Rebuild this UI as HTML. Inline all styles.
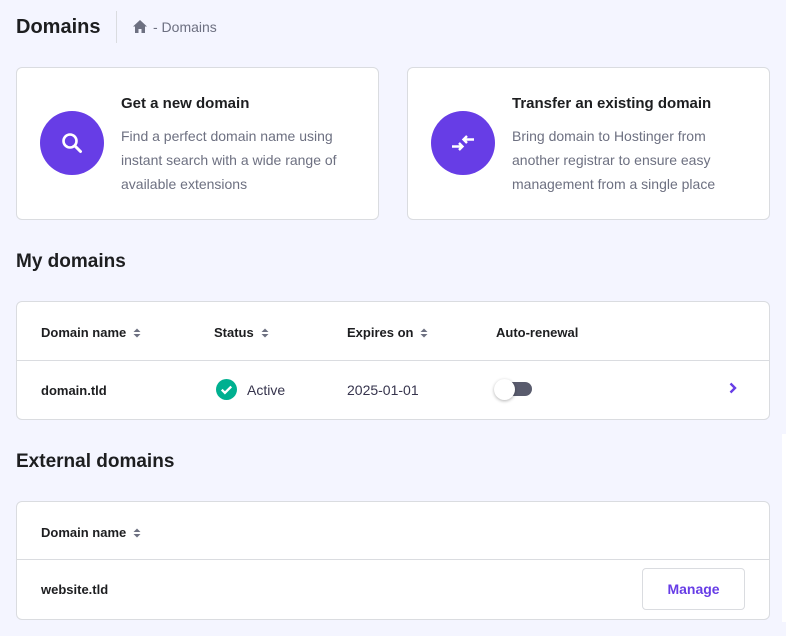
<!DOCTYPE html><html><head><style>
*{margin:0;padding:0;box-sizing:border-box}
body{width:786px;height:636px;background:#f4f5ff;font-family:"Liberation Sans",sans-serif;color:#1d1e20;position:relative;overflow:hidden}
.a{position:absolute;white-space:nowrap}
.card{position:absolute;background:#fff;border:1px solid #dadce0;border-radius:6px}
.circ{position:absolute;width:64px;height:64px;border-radius:50%;background:#673de6}
.t{font-size:15px;font-weight:bold}
.d{font-size:14px;color:#6d7081;line-height:24px}
.h{font-size:19px;font-weight:bold}
.th{font-size:13px;font-weight:bold}
.sort{display:inline-block;margin-left:7px;width:8px;height:10px;vertical-align:-1px}
</style></head><body>
<div class="a" style="left:16px;top:16px;font-size:20px;font-weight:bold">Domains</div>
<div class="a" style="left:116px;top:11px;width:1px;height:32px;background:#dadce0"></div>
<svg class="a" style="left:132px;top:19px" width="16" height="15" viewBox="0 0 16 15"><path d="M8 1L1 7.5h2V14h3.5V10h3v4H13V7.5h2z" fill="#6d7081"/></svg>
<div class="a" style="left:153px;top:19px;font-size:14px;color:#6d7081">- Domains</div>

<div class="card" style="left:16px;top:67px;width:363px;height:153px"></div>
<div class="circ" style="left:40px;top:111px"></div>
<svg class="a" style="left:58px;top:129px" width="28" height="28" viewBox="0 0 28 28"><circle cx="12" cy="12" r="6.5" fill="none" stroke="#fff" stroke-width="2.6"/><path d="M17 17l5.5 5.5" stroke="#fff" stroke-width="3" stroke-linecap="round"/></svg>
<div class="a t" style="left:121px;top:95px">Get a new domain</div>
<div class="a d" style="left:121px;top:124px">Find a perfect domain name using<br>instant search with a wide range of<br>available extensions</div>

<div class="card" style="left:407px;top:67px;width:363px;height:153px"></div>
<div class="circ" style="left:431px;top:111px"></div>
<svg class="a" style="left:449px;top:129px" width="28" height="28" viewBox="0 0 28 28"><path d="M3 17.5h10M10 14l3.5 3.5-3.5 3.5M25 10.5H15M18 7l-3.5 3.5 3.5 3.5" fill="none" stroke="#fff" stroke-width="2.4"/></svg>
<div class="a t" style="left:512px;top:95px">Transfer an existing domain</div>
<div class="a d" style="left:512px;top:124px">Bring domain to Hostinger from<br>another registrar to ensure easy<br>management from a single place</div>

<div class="a h" style="left:16px;top:251px">My domains</div>
<div class="card" style="left:16px;top:301px;width:754px;height:119px"></div>
<div class="a" style="left:17px;top:360px;width:752px;height:1px;background:#dadce0"></div>
<div class="a th" style="left:41px;top:325px">Domain name<svg class="sort" viewBox="0 0 8 10"><path d="M4 0.5L7.5 4h-7zM4 9.5L7.5 6h-7z" fill="#6d7081"/></svg></div>
<div class="a th" style="left:214px;top:325px">Status<svg class="sort" viewBox="0 0 8 10"><path d="M4 0.5L7.5 4h-7zM4 9.5L7.5 6h-7z" fill="#6d7081"/></svg></div>
<div class="a th" style="left:347px;top:325px">Expires on<svg class="sort" viewBox="0 0 8 10"><path d="M4 0.5L7.5 4h-7zM4 9.5L7.5 6h-7z" fill="#6d7081"/></svg></div>
<div class="a th" style="left:496px;top:325px">Auto-renewal</div>
<div class="a th" style="left:41px;top:383px">domain.tld</div>
<svg class="a" style="left:216px;top:379px" width="21" height="21" viewBox="0 0 20 20"><circle cx="10" cy="10" r="10" fill="#00b090"/><path d="M5.5 10.2l3 3 6-6" fill="none" stroke="#fff" stroke-width="2.2"/></svg>
<div class="a" style="left:247px;top:382px;font-size:14px;color:#36344d">Active</div>
<div class="a" style="left:347px;top:382px;font-size:14px;color:#36344d">2025-01-01</div>
<div class="a" style="left:500px;top:382px;width:32px;height:14px;border-radius:7px;background:#595b6d"></div>
<div class="a" style="left:494px;top:379px;width:21px;height:21px;border-radius:50%;background:#fff;box-shadow:0 1px 3px rgba(0,0,0,.3)"></div>
<svg class="a" style="left:728px;top:382px" width="10" height="12" viewBox="0 0 10 12"><path d="M2.5 1.5l4.5 4.5-4.5 4.5" fill="none" stroke="#673de6" stroke-width="2.4"/></svg>

<div class="a h" style="left:16px;top:451px">External domains</div>
<div class="a" style="left:782px;top:434px;width:4px;height:188px;background:#fff"></div>
<div class="card" style="left:16px;top:501px;width:754px;height:119px"></div>
<div class="a" style="left:17px;top:559px;width:752px;height:1px;background:#dadce0"></div>
<div class="a th" style="left:41px;top:525px">Domain name<svg class="sort" viewBox="0 0 8 10"><path d="M4 0.5L7.5 4h-7zM4 9.5L7.5 6h-7z" fill="#6d7081"/></svg></div>
<div class="a th" style="left:41px;top:582px">website.tld</div>
<div class="a" style="left:642px;top:568px;width:103px;height:42px;border:1px solid #dadce0;border-radius:4px;background:#fff;text-align:center;line-height:40px;font-size:14px;font-weight:bold;color:#673de6">Manage</div>
</body></html>
